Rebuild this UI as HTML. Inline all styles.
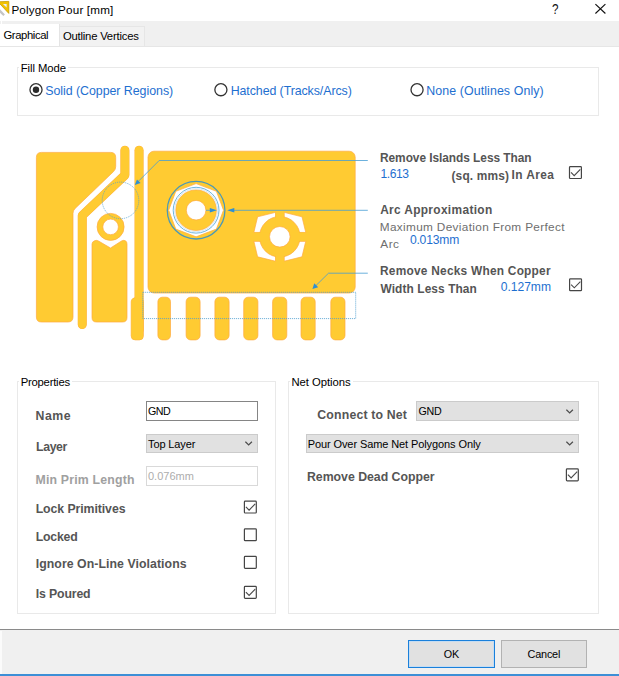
<!DOCTYPE html>
<html><head><meta charset="utf-8"><title>Polygon Pour [mm]</title>
<style>
html,body{margin:0;padding:0;background:#fff;}
body{width:619px;height:676px;position:relative;overflow:hidden;font-family:'Liberation Sans',sans-serif;}
.abs,.t,.box,.gfx{position:absolute;}
.t{white-space:pre;}
.gfx{left:0;top:0;}
.box{box-sizing:border-box;}
.grp{border:1px solid #e9e9e9;}
.lblbg{background:#fff;}
</style></head><body>
<!-- tab bar -->
<div class="box" style="left:2px;top:20.9px;width:616.5px;height:25.1px;background:#f0f0f0"></div>
<div class="box" style="left:0;top:20.9px;width:0.8px;height:3.5px;background:#f0f0f0"></div>
<div class="box" style="left:0;top:24px;width:60px;height:22px;background:#fff;border-right:1px solid #e4e4e4"></div>
<div class="box" style="left:60px;top:26px;width:85px;height:20px;border:1px solid #e6e6e6;border-left:none;border-bottom:none;background:#f2f2f2"></div>
<div class="box" style="left:0;top:46px;width:619px;height:0.9px;background:#e6e6e6"></div>
<!-- title buttons -->
<svg class="abs" style="left:590px;top:0px" width="20" height="18" viewBox="0 0 20 18"><path d="M5.4,4.1 L15.4,13.5 M15.4,4.1 L5.4,13.5" stroke="#111" stroke-width="1.15" fill="none"/></svg>
<span class="t" style="left:552.3px;top:0.5px;font-size:14.6px;line-height:16px;font-weight:400;color:#111;transform:scaleX(0.8);transform-origin:0 0">?</span>
<!-- icon -->
<svg class="abs" style="left:0;top:0" width="12" height="18" viewBox="0 0 12 18">
<path d="M0,9.3 L4.9,14.6 L3.3,16 L0,12.7 Z" fill="#c4c4c4"/>
<path d="M-2,1.8 L8.8,1.4 L8.8,13.4 Z" fill="#f2c200" stroke="#c89a00" stroke-width="0.8"/>
<path d="M3.0,3.9 L6.6,3.9 L6.6,7.6 Z" fill="#e6ecff"/>
</svg>
<!-- group boxes -->
<div class="box grp" style="left:17px;top:67px;width:582px;height:49px"></div>
<div class="box lblbg" style="left:19px;top:60px;width:49px;height:14px"></div>
<div class="box grp" style="left:17px;top:381px;width:259px;height:233px"></div>
<div class="box lblbg" style="left:19px;top:374px;width:53px;height:14px"></div>
<div class="box grp" style="left:288px;top:381px;width:311px;height:233px"></div>
<div class="box lblbg" style="left:290px;top:374px;width:63px;height:14px"></div>
<!-- radios -->
<svg class="abs" style="left:26px;top:79px" width="20" height="20" viewBox="0 0 20 20"><circle cx="10.00" cy="10.70" r="6.05" fill="#fff" stroke="#333" stroke-width="1.3"/><circle cx="10.00" cy="10.70" r="3.2" fill="#2b2b2b"/></svg><svg class="abs" style="left:210px;top:79px" width="20" height="20" viewBox="0 0 20 20"><circle cx="10.90" cy="10.70" r="6.05" fill="#fff" stroke="#333" stroke-width="1.3"/></svg><svg class="abs" style="left:407px;top:79px" width="20" height="20" viewBox="0 0 20 20"><circle cx="10.05" cy="10.70" r="6.05" fill="#fff" stroke="#333" stroke-width="1.3"/></svg>
<svg class="gfx" width="619" height="676" viewBox="0 0 619 676">
<defs><clipPath id="oc2"><polygon points="279.8,211.3 302.0,216.8 306.8,236.8 302.0,256.8 279.8,262.3 257.6,256.8 252.8,236.8 257.6,216.8"/></clipPath></defs>
<!-- left polygon -->
<path d="M41.4,152.4 H110.7 Q115.7,152.4 115.7,157.4 V166.5 Q115.7,169.5 113.6,171.5 L75.1,208.5 Q73,210.5 73,213.5 V317 Q73,322 68,322 H41.4 Q36.4,322 36.4,317 V157.4 Q36.4,152.4 41.4,152.4 Z" fill="#ffcb32" stroke="#ffab40" stroke-width="0.7"/>
<!-- tracks: orange underlay then yellow -->
<g fill="none" stroke-linecap="round" stroke-linejoin="round">
<path d="M124.9,150.2 V175.1 L82.25,215.5 V324.5" stroke="#ffab40" stroke-width="9.05"/>
<path d="M139.05,150.2 V330" stroke="#ffab40" stroke-width="9.05"/>
<rect x="131.2" y="297.8" width="12.2" height="42.1" rx="4" fill="#ffcb32" stroke="#ffab40" stroke-width="0.7"/>
<path d="M124.9,150.2 V175.1 L82.25,215.5 V324.5" stroke="#ffcb32" stroke-width="8.35"/>
<path d="M139.05,150.2 V330" stroke="#ffcb32" stroke-width="8.35"/>
</g>
<rect x="131.55" y="298.15" width="11.5" height="41.4" rx="3.7" fill="#ffcb32"/>
<!-- middle polygon with notch -->
<path d="M94.5,240.8 Q96.5,239.8 98.5,241 L110.5,248 L121.5,241 Q123.5,239.8 125.5,240.8 Q127,241.8 127,244 V317.5 Q127,322 122.5,322 H96.5 Q92,322 92,317.5 V244 Q92,241.8 94.5,240.8 Z" fill="#ffcb32" stroke="#ffab40" stroke-width="0.7"/>
<!-- pad ring -->
<circle cx="110.6" cy="226.9" r="10.65" fill="none" stroke="#ffcb32" stroke-width="5.7"/>
<circle cx="110.6" cy="226.9" r="13.5" fill="none" stroke="#ffab40" stroke-width="0.7"/>
<circle cx="110.6" cy="226.9" r="7.8" fill="none" stroke="#ffab40" stroke-width="0.7"/>
<!-- big polygon -->
<rect x="148" y="151.2" width="207.2" height="141.8" rx="6" fill="#ffcb32" stroke="#ffab40" stroke-width="0.7"/>
<!-- via 1 -->
<polygon points="196.1,183.6 216.4,191.3 223.5,210.2 216.4,229.1 196.1,236.8 175.8,229.1 168.7,210.2 175.8,191.3" fill="#fff" stroke="#ffab40" stroke-width="0.7"/>
<circle cx="196.1" cy="210.2" r="15.05" fill="none" stroke="#ffcb32" stroke-width="10.5"/>
<circle cx="196.1" cy="210.2" r="20.3" fill="none" stroke="#ffab40" stroke-width="0.7"/>
<circle cx="196.1" cy="210.2" r="9.8" fill="none" stroke="#ffab40" stroke-width="0.7"/>
<circle cx="196.1" cy="210.2" r="22.9" fill="none" stroke="#5fabda" stroke-width="0.9"/>
<circle cx="196.1" cy="210.2" r="21.5" fill="none" stroke="#c4e0f3" stroke-width="0.7"/>
<circle cx="196.1" cy="210.2" r="28.8" fill="none" stroke="#4a98b8" stroke-width="1.3"/>
<!-- via 2 thermal -->
<polygon points="279.8,211.3 302.0,216.8 306.8,236.8 302.0,256.8 279.8,262.3 257.6,256.8 252.8,236.8 257.6,216.8" fill="#fff" stroke="#ffab40" stroke-width="0.7"/>
<g clip-path="url(#oc2)">
<rect x="275.4" y="206" width="8.8" height="62" fill="#ffcb32" stroke="#ffab40" stroke-width="0.7"/>
<rect x="248" y="232.3" width="64" height="9" fill="#ffcb32" stroke="#ffab40" stroke-width="0.7"/>
<circle cx="279.8" cy="236.8" r="20.3" fill="#ffcb32" stroke="#ffab40" stroke-width="0.7"/>
</g>
<rect x="275.75" y="206" width="8.1" height="62" fill="#ffcb32"/>
<rect x="248" y="232.65" width="64" height="8.3" fill="#ffcb32"/>
<circle cx="279.8" cy="236.8" r="10.3" fill="#fff" stroke="#ffab40" stroke-width="0.7"/>
<rect x="157.9" y="297.2" width="12.6" height="42.7" rx="4.5" fill="#ffcb32" stroke="#ffab40" stroke-width="0.7"/>
<rect x="186.1" y="297.2" width="14" height="42.7" rx="4.5" fill="#ffcb32" stroke="#ffab40" stroke-width="0.7"/>
<rect x="214.9" y="297.2" width="14.2" height="42.7" rx="4.5" fill="#ffcb32" stroke="#ffab40" stroke-width="0.7"/>
<rect x="243.7" y="297.2" width="14.2" height="42.7" rx="4.5" fill="#ffcb32" stroke="#ffab40" stroke-width="0.7"/>
<rect x="272.6" y="297.2" width="14.2" height="42.7" rx="4.5" fill="#ffcb32" stroke="#ffab40" stroke-width="0.7"/>
<rect x="301.0" y="297.2" width="14.2" height="42.7" rx="4.5" fill="#ffcb32" stroke="#ffab40" stroke-width="0.7"/>
<rect x="330.8" y="297.2" width="14.2" height="42.7" rx="4.5" fill="#ffcb32" stroke="#ffab40" stroke-width="0.7"/>

<!-- callouts -->
<g fill="none" stroke="#469dd4" stroke-width="0.8">
<path d="M367.8,160.5 H159.2 L137.5,182.2"/>
<path d="M367.8,210.3 H233"/>
<path d="M206,210.3 H211"/>
<path d="M367.8,273.2 H328.5 L315,286.5"/>
<circle cx="120.5" cy="200.4" r="18.3" stroke-dasharray="1.1 0.9" stroke-width="0.75" stroke="#4f9fd0"/>
<rect x="142.8" y="292.3" width="212.9" height="26.3" stroke-dasharray="1 1" stroke-width="0.9" stroke="#4f9fd0"/>
</g>
<g fill="#2f8fd2">
<polygon points="134.8,184.9 137,179.5 140.6,183.1"/>
<polygon points="227.2,210.3 234.3,208 234.3,212.6"/>
<polygon points="216.9,210.3 209.8,208 209.8,212.6"/>
<polygon points="312.4,289.1 314.3,283.3 318.2,287.2"/>
</g>
</svg>
<!-- right checkboxes -->
<svg class="abs" style="left:565px;top:163px" width="20" height="20" viewBox="0 0 20 20"><rect x="4.50" y="3.60" width="11.9" height="11.9" rx="0.8" fill="#fff" stroke="#454545" stroke-width="1.2"/><path d="M6.00,9.40 L9.20,12.60 L15.30,6.40" fill="none" stroke="#4a4a4a" stroke-width="1.15"/></svg><svg class="abs" style="left:566px;top:275px" width="20" height="20" viewBox="0 0 20 20"><rect x="3.60" y="3.80" width="11.9" height="11.9" rx="0.8" fill="#fff" stroke="#454545" stroke-width="1.2"/><path d="M5.10,9.60 L8.30,12.80 L14.40,6.60" fill="none" stroke="#4a4a4a" stroke-width="1.15"/></svg>
<!-- properties -->
<div class="box" style="left:146px;top:401px;width:112px;height:20px;border:1px solid #858585;background:#fff"></div>
<div class="box" style="left:146px;top:434px;width:112px;height:19px;border:1px solid #cbcbcb;background:#e1e1e1"></div>
<svg class="abs" style="left:244.5px;top:441px" width="8" height="5" viewBox="0 0 8 5"><path d="M0.4,0.7 L3.65,3.9 L6.9,0.7" fill="none" stroke="#4d4d4d" stroke-width="1.25"/></svg>
<div class="box" style="left:146px;top:466px;width:112px;height:19.5px;border:1px solid #d9d9d9;background:#fff"></div>
<svg class="abs" style="left:240px;top:497px" width="20" height="20" viewBox="0 0 20 20"><rect x="4.40" y="4.10" width="11.9" height="11.9" rx="0.8" fill="#fff" stroke="#454545" stroke-width="1.2"/><path d="M5.90,9.90 L9.10,13.10 L15.20,6.90" fill="none" stroke="#4a4a4a" stroke-width="1.15"/></svg><svg class="abs" style="left:240px;top:525px" width="20" height="20" viewBox="0 0 20 20"><rect x="4.40" y="3.80" width="11.9" height="11.9" rx="0.8" fill="#fff" stroke="#454545" stroke-width="1.2"/></svg><svg class="abs" style="left:240px;top:552px" width="20" height="20" viewBox="0 0 20 20"><rect x="4.40" y="4.40" width="11.9" height="11.9" rx="0.8" fill="#fff" stroke="#454545" stroke-width="1.2"/></svg><svg class="abs" style="left:240px;top:582px" width="20" height="20" viewBox="0 0 20 20"><rect x="4.40" y="4.40" width="11.9" height="11.9" rx="0.8" fill="#fff" stroke="#454545" stroke-width="1.2"/><path d="M5.90,10.20 L9.10,13.40 L15.20,7.20" fill="none" stroke="#4a4a4a" stroke-width="1.15"/></svg>
<!-- net options -->
<div class="box" style="left:416px;top:401px;width:163px;height:19.5px;border:1px solid #cbcbcb;background:#e1e1e1"></div>
<svg class="abs" style="left:565.5px;top:408.5px" width="8" height="5" viewBox="0 0 8 5"><path d="M0.4,0.7 L3.65,3.9 L6.9,0.7" fill="none" stroke="#4d4d4d" stroke-width="1.25"/></svg>
<div class="box" style="left:306px;top:434px;width:273px;height:19px;border:1px solid #cbcbcb;background:#e1e1e1"></div>
<svg class="abs" style="left:565.5px;top:441px" width="8" height="5" viewBox="0 0 8 5"><path d="M0.4,0.7 L3.65,3.9 L6.9,0.7" fill="none" stroke="#4d4d4d" stroke-width="1.25"/></svg>
<svg class="abs" style="left:562px;top:465px" width="20" height="20" viewBox="0 0 20 20"><rect x="4.40" y="3.90" width="11.9" height="11.9" rx="0.8" fill="#fff" stroke="#454545" stroke-width="1.2"/><path d="M5.90,9.70 L9.10,12.90 L15.20,6.70" fill="none" stroke="#4a4a4a" stroke-width="1.15"/></svg>
<!-- bottom bar -->
<div class="box" style="left:0;top:629px;width:619px;height:47px;background:#f0f0f0;border-top:1.5px solid #8a8a8a"></div>
<div class="box" style="left:0;top:674.3px;width:619px;height:1.7px;background:#3d8fd6"></div>
<div class="box" style="left:0;top:631px;width:1.5px;height:43px;background:#fbfbfb"></div>
<div class="box" style="left:408px;top:640px;width:87px;height:28px;border:1px solid #1a80db;background:#e1e1e1;box-shadow:inset 0 0 0 1px #c6ddf2"></div>
<div class="box" style="left:500.5px;top:640px;width:86px;height:28px;border:1px solid #b2b2b2;background:#e1e1e1"></div>
<span class="t" style="left:11.4px;top:4px;font-size:11.7px;line-height:11.7px;font-weight:400;color:#000;letter-spacing:0.156px">Polygon Pour [mm]</span>
<span class="t" style="left:3.5px;top:30px;font-size:11.3px;line-height:11.3px;font-weight:400;color:#000;letter-spacing:-0.413px">Graphical</span>
<span class="t" style="left:62.9px;top:31px;font-size:11.3px;line-height:11.3px;font-weight:400;color:#000;letter-spacing:-0.207px">Outline Vertices</span>
<span class="t" style="left:20.7px;top:63px;font-size:11.3px;line-height:11.3px;font-weight:400;color:#000;letter-spacing:-0.050px">Fill Mode</span>
<span class="t" style="left:45.2px;top:85px;font-size:12.4px;line-height:12.4px;font-weight:400;color:#1e6fd0;letter-spacing:-0.038px">Solid (Copper Regions)</span>
<span class="t" style="left:230.7px;top:85px;font-size:12.4px;line-height:12.4px;font-weight:400;color:#1e6fd0;letter-spacing:-0.085px">Hatched (Tracks/Arcs)</span>
<span class="t" style="left:426.2px;top:85px;font-size:12.4px;line-height:12.4px;font-weight:400;color:#1e6fd0;letter-spacing:0.095px">None (Outlines Only)</span>
<span class="t" style="left:380.0px;top:153px;font-size:11.9px;line-height:11.9px;font-weight:700;color:#555555;letter-spacing:-0.048px">Remove Islands Less Than</span>
<span class="t" style="left:380.5px;top:168px;font-size:12.1px;line-height:12.1px;font-weight:400;color:#1e6fd0;letter-spacing:-0.450px">1.613</span>
<span class="t" style="left:451.5px;top:171px;font-size:11.9px;line-height:11.9px;font-weight:700;color:#555555;letter-spacing:0.163px">(sq. mms)</span>
<span class="t" style="left:511.6px;top:170px;font-size:11.9px;line-height:11.9px;font-weight:700;color:#555555;letter-spacing:0.400px">In Area</span>
<span class="t" style="left:380.2px;top:205px;font-size:11.9px;line-height:11.9px;font-weight:700;color:#555555;letter-spacing:0.338px">Arc Approximation</span>
<span class="t" style="left:379.8px;top:222px;font-size:11.8px;line-height:11.8px;font-weight:400;color:#6e6e6e;letter-spacing:0.334px">Maximum Deviation From Perfect</span>
<span class="t" style="left:380.3px;top:239px;font-size:11.8px;line-height:11.8px;font-weight:400;color:#6e6e6e;letter-spacing:0.500px">Arc</span>
<span class="t" style="left:409.9px;top:234px;font-size:12.1px;line-height:12.1px;font-weight:400;color:#1e6fd0;letter-spacing:-0.183px">0.013mm</span>
<span class="t" style="left:380.0px;top:266px;font-size:11.9px;line-height:11.9px;font-weight:700;color:#555555;letter-spacing:0.235px">Remove Necks When Copper</span>
<span class="t" style="left:380.5px;top:284px;font-size:11.9px;line-height:11.9px;font-weight:700;color:#555555;letter-spacing:0.093px">Width Less Than</span>
<span class="t" style="left:500.7px;top:281px;font-size:12.1px;line-height:12.1px;font-weight:400;color:#1e6fd0;letter-spacing:-0.017px">0.127mm</span>
<span class="t" style="left:20.7px;top:377px;font-size:11.3px;line-height:11.3px;font-weight:400;color:#000;letter-spacing:-0.233px">Properties</span>
<span class="t" style="left:35.5px;top:410px;font-size:12.3px;line-height:12.3px;font-weight:700;color:#555555;letter-spacing:0.500px">Name</span>
<span class="t" style="left:147.9px;top:406px;font-size:10.7px;line-height:10.7px;font-weight:400;color:#000;letter-spacing:-0.400px">GND</span>
<span class="t" style="left:36.1px;top:441px;font-size:12.3px;line-height:12.3px;font-weight:700;color:#555555;letter-spacing:-0.400px">Layer</span>
<span class="t" style="left:148.0px;top:439px;font-size:11px;line-height:11px;font-weight:400;color:#000;letter-spacing:-0.113px">Top Layer</span>
<span class="t" style="left:35.5px;top:474px;font-size:12.3px;line-height:12.3px;font-weight:700;color:#a0a0a0;letter-spacing:0.186px">Min Prim Length</span>
<span class="t" style="left:148.0px;top:471px;font-size:11px;line-height:11px;font-weight:400;color:#adadad;letter-spacing:0.000px">0.076mm</span>
<span class="t" style="left:35.7px;top:503px;font-size:12.3px;line-height:12.3px;font-weight:700;color:#555555;letter-spacing:-0.079px">Lock Primitives</span>
<span class="t" style="left:35.7px;top:531px;font-size:12.3px;line-height:12.3px;font-weight:700;color:#555555;letter-spacing:-0.220px">Locked</span>
<span class="t" style="left:35.7px;top:558px;font-size:12.3px;line-height:12.3px;font-weight:700;color:#555555;letter-spacing:0.062px">Ignore On-Line Violations</span>
<span class="t" style="left:35.7px;top:588px;font-size:12.3px;line-height:12.3px;font-weight:700;color:#555555;letter-spacing:-0.138px">Is Poured</span>
<span class="t" style="left:291.5px;top:377px;font-size:11.3px;line-height:11.3px;font-weight:400;color:#000;letter-spacing:-0.050px">Net Options</span>
<span class="t" style="left:317.3px;top:409px;font-size:12.3px;line-height:12.3px;font-weight:700;color:#555555;letter-spacing:0.169px">Connect to Net</span>
<span class="t" style="left:418.5px;top:406px;font-size:10.7px;line-height:10.7px;font-weight:400;color:#000;letter-spacing:-0.250px">GND</span>
<span class="t" style="left:307.7px;top:439px;font-size:11px;line-height:11px;font-weight:400;color:#000;letter-spacing:-0.097px">Pour Over Same Net Polygons Only</span>
<span class="t" style="left:307.0px;top:471px;font-size:12.3px;line-height:12.3px;font-weight:700;color:#555555;letter-spacing:-0.012px">Remove Dead Copper</span>
<span class="t" style="left:443.7px;top:649px;font-size:10.8px;line-height:10.8px;font-weight:400;color:#000;letter-spacing:-0.100px">OK</span>
<span class="t" style="left:527.5px;top:649px;font-size:10.9px;line-height:10.9px;font-weight:400;color:#000;letter-spacing:-0.200px">Cancel</span>
</body></html>
